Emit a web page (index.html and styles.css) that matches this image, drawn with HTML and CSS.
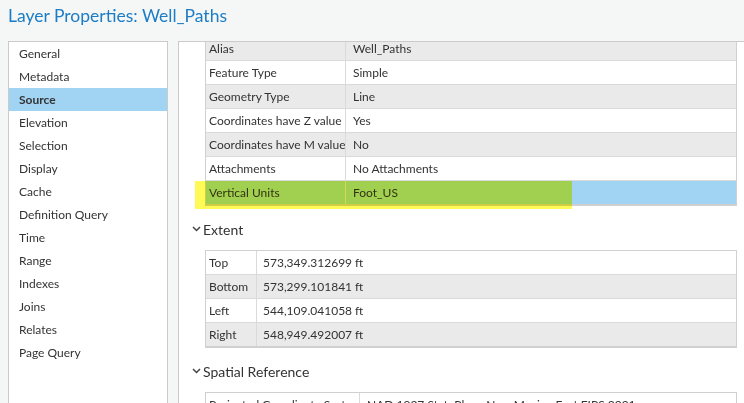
FILE: index.html
```html
<!DOCTYPE html>
<html lang="en">
<head>
    <meta charset="UTF-8">
    <meta name="viewport" content="width=device-width, initial-scale=1.0">
    <title>Layer Properties</title>
    <link rel="stylesheet" href="styles.css">
</head>
<body>
    <h1 class="title">Layer Properties: Well_Paths</h1>

    <div class="dialog">
        <ul class="nav">
            <li>General</li>
            <li>Metadata</li>
            <li class="active">Source</li>
            <li>Elevation</li>
            <li>Selection</li>
            <li>Display</li>
            <li>Cache</li>
            <li>Definition Query</li>
            <li>Time</li>
            <li>Range</li>
            <li>Indexes</li>
            <li>Joins</li>
            <li>Relates</li>
            <li>Page Query</li>
        </ul>

        <div class="pane">
            <div class="pane-scroll">
                <!-- general source properties -->
                <div class="grid props">
                    <div class="row alt"><span class="key">Alias</span><span class="val">Well_Paths</span></div>
                    <div class="row"><span class="key">Feature Type</span><span class="val">Simple</span></div>
                    <div class="row alt"><span class="key">Geometry Type</span><span class="val">Line</span></div>
                    <div class="row"><span class="key">Coordinates have Z value</span><span class="val">Yes</span></div>
                    <div class="row alt"><span class="key">Coordinates have M value</span><span class="val">No</span></div>
                    <div class="row"><span class="key">Attachments</span><span class="val">No Attachments</span></div>
                    <div class="row selected">
                        <span class="key">Vertical Units</span><span class="val">Foot_US</span>
                        <span class="marker"></span>
                    </div>
                </div>

                <div class="section-head">
                    <svg class="chevron" width="9" height="6" viewBox="0 0 9 6"><path d="M1 1l3.5 3.5L8 1" fill="none" stroke="#444" stroke-width="1.5"/></svg>
                    Extent
                </div>
                <div class="grid extent">
                    <div class="row"><span class="key">Top</span><span class="num">573,349.312699</span><span class="unit">ft</span></div>
                    <div class="row alt"><span class="key">Bottom</span><span class="num">573,299.101841</span><span class="unit">ft</span></div>
                    <div class="row"><span class="key">Left</span><span class="num">544,109.041058</span><span class="unit">ft</span></div>
                    <div class="row alt"><span class="key">Right</span><span class="num">548,949.492007</span><span class="unit">ft</span></div>
                </div>

                <div class="section-head">
                    <svg class="chevron" width="9" height="6" viewBox="0 0 9 6"><path d="M1 1l3.5 3.5L8 1" fill="none" stroke="#444" stroke-width="1.5"/></svg>
                    Spatial Reference
                </div>
                <div class="grid spatial">
                    <div class="row"><span class="key">Projected Coordinate System</span><span class="val">NAD 1927 StatePlane New Mexico East FIPS 3001</span></div>
                    <div class="row alt"><span class="key">Projection</span><span class="val">Transverse Mercator</span></div>
                </div>
            </div>
        </div>
    </div>
</body>
</html>
```

FILE: styles.css
```css
html, body {
    height: 100%;
}

body {
    margin: 0;
    background: #f5f7f7;
    font-family: Lato, "Open Sans", sans-serif;
    color: #333;
    overflow: hidden;
}

.title {
    margin: 0;
    padding: 4px 0 0 8px;
    height: 37px;
    line-height: 24px;
    font-size: 17.5px;
    font-weight: 400;
    color: #1c7cc5;
}

.dialog {
    display: flex;
    height: 380px;
}

/* page list on the left */
.nav {
    margin: 0 0 0 8px;
    padding: 0;
    list-style: none;
    width: 160px;
    box-sizing: border-box;
    background: #fff;
    border: 1px solid #cbcbcb;
}

.nav li {
    height: 23px;
    line-height: 23px;
    padding-left: 10px;
    font-size: 12px;
    white-space: nowrap;
}

.nav li.active {
    background: #a1d4f2;
    font-weight: 700;
}

/* scrolled property pane */
.pane {
    flex: 1;
    margin-left: 10px;
    background: #fff;
    border: 1px solid #cbcbcb;
    border-right: none;
    overflow: hidden;
}

.pane-scroll {
    margin-top: -6px;
}

.grid {
    width: 532px;
    margin-left: 26px;
    box-sizing: border-box;
    border: 1px solid #d0d0d0;
    font-size: 12px;
}

.row {
    display: flex;
    align-items: center;
    height: 24px;
    box-sizing: border-box;
    border-bottom: 1px solid #dadada;
    background: #fff;
    white-space: nowrap;
}

.row:last-child {
    border-bottom-color: #d0d0d0;
}

.row.alt {
    background: #eaeaea;
}

.row.selected {
    position: relative;
    background: #a1d4f2;
}

.row > span {
    display: flex;
    align-items: center;
    flex-shrink: 0;
    height: 100%;
    box-sizing: border-box;
}

.key {
    padding-left: 3px;
    border-right: 1px solid #dadada;
    overflow: hidden;
}

.val {
    padding-left: 7px;
}

.props .key {
    width: 140px;
}

.extent .key {
    width: 51px;
}

.extent .num {
    width: 90px;
    padding-left: 6px;
}

.extent .unit {
    padding-left: 8px;
}

.spatial .key {
    width: 154px;
}

/* highlighter stroke over the selected row */
.marker {
    position: absolute;
    left: -11px;
    top: 0;
    width: 377px;
    height: 28px !important;
    background: #fffa55;
    mix-blend-mode: multiply;
}

.section-head {
    display: flex;
    align-items: center;
    height: 24px;
    padding: 11px 0 9px 13px;
    font-size: 14px;
    color: #333;
}

.chevron {
    margin-right: 2px;
}
```
